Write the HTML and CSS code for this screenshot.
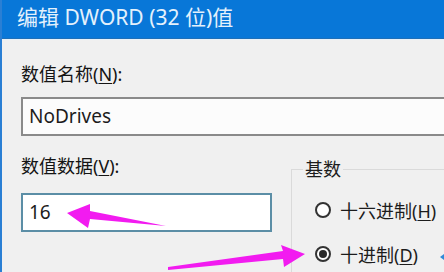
FILE: index.html
```
<html>

<head>
  <link rel="stylesheet" href="styles.css">
</head>

<body>
  <div class="window">
    <div class="titlebar">编辑 DWORD (32 位)值</div>

    <div class="content">
      <div class="label">数值名称(<u>N</u>):</div>
      <div class="textbox name-box">NoDrives</div>

      <div class="data-row">
        <div class="data-col">
          <div class="label">数值数据(<u>V</u>):</div>
          <div class="textbox value-box">16</div>
        </div>

        <fieldset class="base-group">
          <legend>基数</legend>
          <div class="radio-row">
            <span class="radio"></span>
            <span>十六进制(<u>H</u>)</span>
          </div>
          <div class="radio-row">
            <span class="radio checked"></span>
            <span>十进制(<u>D</u>)</span>
          </div>
        </fieldset>
      </div>
    </div>

    <!-- pink arrows drawn on top of the screenshot -->
    <svg class="marks" width="444" height="272" viewBox="0 0 444 272">
      <polygon fill="#f21bf0" points="67,213 90,204 90,211 166,226 90,219 88,228" />
      <polygon fill="#f21bf0" points="305,254 281,245 283,251 168,267 168,270 283,259 284,267" />
      <polygon fill="#2f8ad8" points="440,257 444,254 444,260" />
    </svg>
  </div>
</body>

</html>
```

FILE: styles.css
```
body {
  margin: 0;
  overflow: hidden;
  background-color: #f0f0f0;
  font-family: "Noto Sans", "Noto Sans CJK SC", sans-serif;
  color: #1c1c1c;
}

.window {
  position: relative;
  width: 444px;
  height: 272px;
  overflow: hidden;
  border-left: 2px solid #2a7fd4;
  box-sizing: border-box;
}

.titlebar {
  height: 38px;
  background-color: #0877d8;
  border-bottom: 1px solid #1e6fb8;
  box-shadow: 0 1px 0 #e6f0f8;
  color: #e4f1fc;
  font-size: 21px;
  line-height: 34px;
  padding-left: 15px;
  white-space: nowrap;
}

.content {
  padding-left: 19px;
}

.label {
  font-size: 18px;
  line-height: 24px;
  white-space: nowrap;
  color: #141414;
}

.content > .label {
  margin-top: 23px;
}

u {
  text-underline-offset: 2px;
}

.textbox {
  box-sizing: border-box;
  height: 39px;
  background-color: #fcfcfc;
  font-size: 19px;
  line-height: 35px;
  padding-left: 6px;
}

.name-box {
  width: 440px;
  margin-top: 11px;
  border: 2px solid #8a8a8a;
  border-right: none;
}

.data-row {
  display: flex;
  margin-top: 18px;
}

.value-box {
  width: 251px;
  margin-top: 15px;
  border: 2px solid #5b8ea6;
  background-color: #ffffff;
}

.base-group {
  margin: 3px 0 0 19px;
  padding: 17px 0 0 23px;
  width: 160px;
  height: 110px;
  border: 1px solid #dadada;
  border-right: none;
}

.base-group legend {
  font-size: 18px;
  line-height: 24px;
  padding: 0 2px;
  margin-left: -12px;
}

.radio-row {
  display: flex;
  align-items: center;
  gap: 9px;
  height: 24px;
  font-size: 18px;
  white-space: nowrap;
  margin-bottom: 20px;
}

.radio {
  flex-shrink: 0;
  width: 16px;
  height: 16px;
  border: 2px solid #333333;
  border-radius: 50%;
  background-color: #ffffff;
  box-sizing: border-box;
  display: flex;
  align-items: center;
  justify-content: center;
}

.radio.checked::after {
  content: "";
  width: 8px;
  height: 8px;
  border-radius: 50%;
  background-color: #2a2a2a;
}

.marks {
  position: absolute;
  left: -2px;
  top: 0;
}
```
